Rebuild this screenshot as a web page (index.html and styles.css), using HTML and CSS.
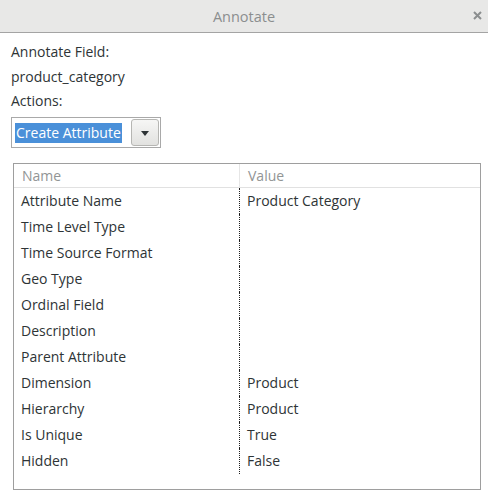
FILE: index.html
```html
<!DOCTYPE html>
<html>
<head>
<meta charset="utf-8">
<link rel="stylesheet" href="styles.css">
</head>
<body>
<div class="titlebar">
  <span class="title">Annotate</span>
  <svg class="close" width="9" height="9" viewBox="0 0 9 9"><path d="M1 1 L8 8 M8 1 L1 8" stroke="#8b8e8f" stroke-width="2" fill="none"/></svg>
</div>
<div class="content">
  <div class="label">Annotate Field:</div>
  <div class="label">product_category</div>
  <div class="label">Actions:</div>
  <div class="combo">
    <span class="combo-text">Create Attribute</span>
    <span class="combo-btn"><span class="arrow"></span></span>
  </div>
  <div class="table">
    <div class="thead">
      <div class="th th-name">Name</div>
      <div class="th">Value</div>
    </div>
    <div class="tbody">
      <div class="row"><div class="cell name">Attribute Name</div><div class="cell val">Product Category</div></div>
      <div class="row"><div class="cell name">Time Level Type</div><div class="cell val"></div></div>
      <div class="row"><div class="cell name">Time Source Format</div><div class="cell val"></div></div>
      <div class="row"><div class="cell name">Geo Type</div><div class="cell val"></div></div>
      <div class="row"><div class="cell name">Ordinal Field</div><div class="cell val"></div></div>
      <div class="row"><div class="cell name">Description</div><div class="cell val"></div></div>
      <div class="row"><div class="cell name">Parent Attribute</div><div class="cell val"></div></div>
      <div class="row"><div class="cell name">Dimension</div><div class="cell val">Product</div></div>
      <div class="row"><div class="cell name">Hierarchy</div><div class="cell val">Product</div></div>
      <div class="row"><div class="cell name">Is Unique</div><div class="cell val">True</div></div>
      <div class="row"><div class="cell name">Hidden</div><div class="cell val">False</div></div>
    </div>
  </div>
</div>
</body>
</html>
```
FILE: styles.css
```css
html, body {
  margin: 0;
  padding: 0;
  background: #ffffff;
}
body {
  width: 488px;
  height: 497px;
  font-family: "Open Sans", "DejaVu Sans", sans-serif;
  font-size: 14px;
  color: #2e3436;
  overflow: hidden;
}
.titlebar {
  height: 32px;
  background: #e8e8e7;
  border-bottom: 1px solid #a4a4a4;
  display: flex;
  align-items: center;
  justify-content: center;
  position: relative;
}
.title {
  color: #8b8e8f;
  font-size: 14.5px;
  font-weight: 500;
}
.close {
  position: absolute;
  right: 6px;
  top: 11px;
}
.content {
  padding: 7px 8px 0 11px;
}
.label {
  height: 24.5px;
  line-height: 24px;
}
.combo {
  margin-top: 3.5px;
  width: 144px;
  height: 29px;
  border: 1px solid #a9a9a9;
  display: flex;
  align-items: center;
  padding: 0 1px 0 3px;
  box-sizing: content-box;
}
.combo-text {
  background: #4a90d9;
  color: #ffffff;
  line-height: 20px;
  height: 20px;
  padding: 0 1px;
}
.combo-btn {
  margin-left: auto;
  width: 26px;
  height: 25px;
  border: 1px solid #b6b6b3;
  border-radius: 3px;
  background: linear-gradient(#f6f6f5, #e2e2e0);
  display: flex;
  align-items: center;
  justify-content: center;
}
.arrow {
  width: 0;
  height: 0;
  border-left: 4.5px solid transparent;
  border-right: 4.5px solid transparent;
  border-top: 5px solid #2e3436;
  margin-top: 1px;
}
.table {
  margin: 15px 0 0 2px;
  width: 466px;
  height: 325px;
  border: 1px solid #9e9e9e;
}
.thead {
  display: grid;
  grid-template-columns: 226px 1fr;
  height: 23px;
  border-bottom: 1px solid #e1e1e1;
}
.th {
  color: #929595;
  line-height: 24px;
  padding-left: 8px;
}
.th-name {
  border-right: 1px solid #e6e6e6;
}
.tbody {
  display: flex;
  flex-direction: column;
}
.row {
  display: grid;
  grid-template-columns: 226px 1fr;
  height: 26px;
}
.cell {
  line-height: 26px;
  padding-left: 7px;
  white-space: nowrap;
}
.name {
  border-right: 1px dotted #1e1e1e;
}
.val {
  padding-left: 7px;
}
```
